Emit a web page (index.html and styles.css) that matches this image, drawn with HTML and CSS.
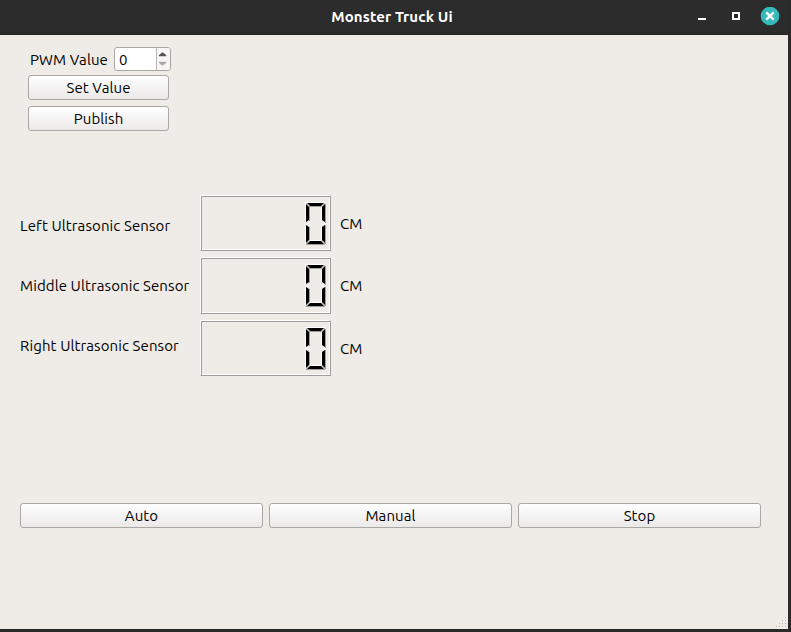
FILE: index.html
```
<!DOCTYPE html>
<html lang="en">
<head>
<meta charset="utf-8">
<title>Monster Truck Ui</title>
<link rel="stylesheet" href="styles.css">
</head>
<body>
<svg class="defs" width="0" height="0" aria-hidden="true">
  <symbol id="zero" viewBox="0 0 22 44">
    <g fill="#fff">
      <path d="M0 0H20V1H1V20H0ZM0 24H1V42H0ZM4 38H16V39H4ZM16 5H17V18H16ZM16 25H17V38H16Z"/>
    </g>
    <g fill="#9f9d9a">
      <path d="M4 4H17V5H4ZM4 5H5V19H4ZM4 25H5V38H4ZM20 2H21V42H20ZM1 42H20V43H1Z"/>
    </g>
    <g fill="#000">
      <path d="M2 1H19L16 4H5Z"/>
      <path d="M1 2L4 5V18L1 20Z"/>
      <path d="M20 2L17 5V18L20 20Z"/>
      <path d="M1 23L4 25V38L1 41Z"/>
      <path d="M20 23L17 25V38L20 41Z"/>
      <path d="M5 39H16L19 42H2Z"/>
    </g>
    <path d="M0 21H4V23H0ZM17 21H21V23H17Z" fill="#f5f3f0"/>
    <path d="M1 1L4.5 4.5M20 1L16.5 4.5M1 42L4.5 38.5M20 42L16.5 38.5" stroke="#c4c2bf" fill="none"/>
  </symbol>
</svg>
<div class="window">
  <header class="titlebar">
    <span class="title">Monster Truck Ui</span>
    <div class="controls">
      <svg width="86" height="20" viewBox="0 0 86 20">
        <path d="M4 11H12V13H4Z" fill="#fff"/>
        <rect x="39" y="6" width="6" height="6" fill="none" stroke="#fff" stroke-width="2"/>
        <circle cx="76" cy="9" r="9.3" fill="#35b9bb"/>
        <path d="M72.3 5.3L79.7 12.7M79.7 5.3L72.3 12.7" stroke="#fff" stroke-width="2.4"/>
      </svg>
    </div>
  </header>
  <main class="content">
    <section class="pwm">
      <div class="pwm-row">
        <span class="pwm-label">PWM Value</span>
        <div class="spinbox">
          <span class="spin-value">0</span>
          <svg class="spin-arrows" width="14" height="22" viewBox="0 0 14 22">
            <path d="M2 8V7L5.5 4H6.5L10 7V8Z" fill="#555"/>
            <path d="M2 14V15L5.5 18H6.5L10 15V14Z" fill="#aaa"/>
          </svg>
        </div>
      </div>
      <button class="button set-value">Set Value</button>
      <button class="button publish">Publish</button>
    </section>
    <section class="sensors">
      <div class="names">
        <span class="left-name">Left Ultrasonic Sensor</span>
        <span class="middle-name">Middle Ultrasonic Sensor</span>
        <span class="right-name">Right Ultrasonic Sensor</span>
      </div>
      <div class="readings">
        <div class="reading"><div class="lcd"><svg width="22" height="44"><use href="#zero"/></svg></div><span class="unit">CM</span></div>
        <div class="reading middle"><div class="lcd"><svg width="22" height="44"><use href="#zero"/></svg></div><span class="unit">CM</span></div>
        <div class="reading"><div class="lcd"><svg width="22" height="44"><use href="#zero"/></svg></div><span class="unit">CM</span></div>
      </div>
    </section>
    <section class="modes">
      <button class="button auto">Auto</button>
      <button class="button manual">Manual</button>
      <button class="button stop">Stop</button>
    </section>
    <svg class="grip" width="11" height="11" viewBox="0 0 11 11" fill="#bab7b3">
      <path d="M9 0h1v1h-1zM6 3h1v1h-1zM9 3h1v1h-1zM3 6h1v1h-1zM6 6h1v1h-1zM9 6h1v1h-1zM0 9h1v1h-1zM3 9h1v1h-1zM6 9h1v1h-1zM9 9h1v1h-1z"/>
    </svg>
  </main>
</div>
</body>
</html>
```
FILE: styles.css
```
* { box-sizing: border-box; }
body {
  margin: 0;
  width: 791px;
  height: 632px;
  overflow: hidden;
  background: #292b2b;
  font-family: Ubuntu, "Noto Sans", sans-serif;
  font-size: 15px;
  letter-spacing: 0.1px;
  line-height: 20px;
  color: #000;
}
.defs { position: absolute; }
.window { width: 788px; height: 629px; display: flex; flex-direction: column; }
.titlebar {
  height: 35px;
  display: grid;
  grid-template-columns: 1fr auto 1fr;
  background: #2c2c2c;
  border-bottom: 1px solid #222;
  border-top-right-radius: 7px;
}
.title {
  grid-column: 2;
  padding: 7px 0 0;
  margin-right: 4px;
  color: #fff;
  font-size: 15px;
  font-weight: 700;
}
.controls { justify-self: end; padding: 7px 8px 0 0; height: 30px; }
.controls svg { display: block; }
.content {
  position: relative;
  flex: 1;
  display: flex;
  flex-direction: column;
  background: #efebe7;
}
.pwm { width: 171px; padding: 12px 0 0 28px; }
.pwm-row { display: flex; justify-content: space-between; height: 24px; margin-bottom: 4px; white-space: nowrap; }
.pwm-label { padding: 3px 0 0 2px; }
.spinbox {
  display: flex;
  justify-content: space-between;
  width: 57px;
  height: 24px;
  border: 1px solid #aaa8a5;
  border-radius: 3px;
  background: #fff;
  overflow: hidden;
}
.spin-value { padding: 2px 0 0 4px; }
.spin-arrows { border-left: 1px solid #b7b5b2; background: #f7f6f5; }
.button {
  display: block;
  height: 25px;
  padding: 1px 0 0;
  border: 1px solid #aaa8a5;
  border-radius: 3px;
  background: linear-gradient(#fff, #ebe9e8);
  font: inherit;
  letter-spacing: inherit;
  color: inherit;
  line-height: 20px;
}
.pwm .button { width: 141px; }
.publish { margin-top: 6px; }
.sensors { display: flex; margin-top: 64px; height: 182px; }
.names { display: flex; flex-direction: column; gap: 40px; width: 200px; padding: 21px 0 0 20px; white-space: nowrap; }
.readings { display: flex; flex-direction: column; gap: 6px; }
.reading { display: flex; align-items: center; gap: 9px; height: 56px; }
.reading.middle { height: 57px; }
.lcd {
  width: 131px;
  height: 100%;
  display: flex;
  justify-content: flex-end;
  padding: 6px 3px 0 0;
  border: 1px solid;
  border-color: #fff #9f9d9a #9f9d9a #fff;
  box-shadow: inset 1px 1px #9f9d9a, inset -1px -1px #fff;
}
.unit { padding-top: 1px; }
.modes { display: flex; gap: 6px; margin: 126px 0 0 20px; }
.modes .button { width: 243px; }
.grip { position: absolute; right: 1px; bottom: 1px; }
```
